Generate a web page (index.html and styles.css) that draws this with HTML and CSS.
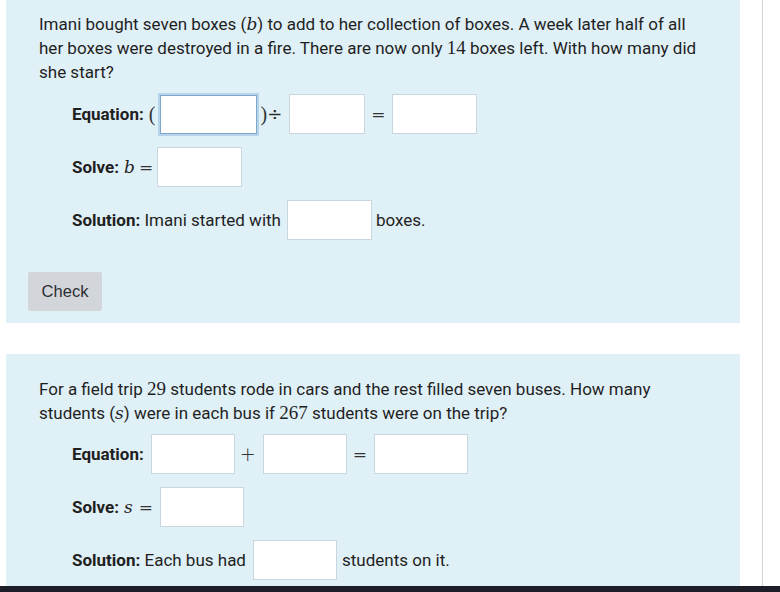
FILE: index.html
```html
<!DOCTYPE html>
<html>
<head>
<meta charset="utf-8">
<link rel="stylesheet" href="styles.css">
</head>
<body>
<div class="page">
  <main class="column">
    <section class="card card-first">
      <p class="question">Imani bought seven boxes (<span class="mi">b</span>) to add to her collection of boxes. A week later half of all her boxes were destroyed in a fire. There are now only <span class="mn">14</span> boxes left. With how many did she start?</p>
      <div class="rows">
        <div class="row">
          <b class="label">Equation:</b>
          <span class="mo paren-open">(</span>
          <span class="box box-focus"></span>
          <span class="mo paren-close">)</span><span class="mo op-div">÷</span>
          <span class="box box-w76"></span>
          <span class="mo op-eq">=</span>
          <span class="box"></span>
        </div>
        <div class="row">
          <b class="label">Solve:</b>
          <span class="mi mi-row">b</span><span class="mo op-eq-b">=</span>
          <span class="box"></span>
        </div>
        <div class="row">
          <b class="label">Solution:</b><span class="txt">&nbsp;Imani started with</span>
          <span class="box box-sol1"></span>
          <span class="txt">boxes.</span>
        </div>
      </div>
      <button class="check">Check</button>
    </section>

    <section class="card card-second">
      <p class="question">For a field trip <span class="mn">29</span> students rode in cars and the rest filled seven buses. How many students (<span class="mi">s</span>) were in each bus if <span class="mn">267</span> students were on the trip?</p>
      <div class="rows">
        <div class="row">
          <b class="label">Equation:</b>
          <span class="box box-eq2a"></span>
          <span class="mo op-plus">+</span>
          <span class="box box-eq2"></span>
          <span class="mo op-eq2">=</span>
          <span class="box box-w94"></span>
        </div>
        <div class="row">
          <b class="label">Solve:</b>
          <span class="mi mi-row">s</span><span class="mo op-eq-s">=</span>
          <span class="box box-eq2"></span>
        </div>
        <div class="row">
          <b class="label">Solution:</b><span class="txt">&nbsp;Each bus had</span>
          <span class="box box-sol2"></span>
          <span class="txt">students on it.</span>
        </div>
      </div>
    </section>
  </main>
  <div class="gutter"></div>
  <div class="scroll"></div>
</div>
<div class="bottombar"></div>
</body>
</html>
```

FILE: styles.css
```css
html, body {
  margin: 0;
  padding: 0;
  background: #ffffff;
  overflow: hidden;
  height: 592px;
}
body {
  font-family: Roboto, "Liberation Sans", sans-serif;
  font-size: 17px;
  color: #1f1f1f;
}
.page {
  display: flex;
  height: 592px;
}
.column {
  width: 734px;
  margin-left: 6px;
  display: flex;
  flex-direction: column;
  gap: 31px;
}
.gutter {
  width: 22px;
}
.scroll {
  width: 17px;
  border-left: 1px solid #d4d4d4;
  background: #ffffff;
}
.card {
  background: #dff0f7;
  padding: 12px 33px 12px 33px;
}
.card-second {
  padding-top: 23px;
  flex: 1;
}
.question {
  margin: 0;
  line-height: 24px;
}
.mi {
  font-family: "DejaVu Serif", "Liberation Serif", serif;
  font-style: italic;
  font-size: 17px;
  line-height: 1;
}
.mn {
  font-family: "Liberation Serif", serif;
  font-size: 19px;
  line-height: 1;
}
.rows {
  display: flex;
  flex-direction: column;
  gap: 13px;
  padding-left: 33px;
  margin-top: 10px;
}
.card-second .rows {
  margin-top: 9px;
}
.row {
  display: flex;
  align-items: center;
  height: 40px;
}
.label {
  font-weight: 700;
}
.txt {
  white-space: pre;
}
.box {
  display: inline-block;
  box-sizing: border-box;
  width: 85px;
  height: 40px;
  background: #ffffff;
  border: 1px solid #c9d6dd;
  flex: none;
}
.box-focus {
  width: 97px;
  height: 39px;
  border: 1px solid #7ea7c9;
  box-shadow: 0 0 0 2px #b7d4ec;
  margin-left: 5px;
}
.box-w76 { width: 76px; }
.box-w94 { width: 94px; }
.box-eq2 { width: 84px; }
.box-eq2a { width: 84px; margin-left: 7px; }
.box-sol1 { margin: 0 4px 0 6px; }
.box-sol2 { width: 84px; margin: 0 5px 0 7px; }
.mo {
  font-family: "DejaVu Serif", "Liberation Serif", serif;
  font-size: 17px;
  color: #333;
  line-height: 1;
}
.paren-open { margin-left: 5px; font-family: "Liberation Serif", serif; font-size: 20px; }
.paren-close { margin-left: 3px; font-family: "Liberation Serif", serif; font-size: 20px; }
.op-div { margin-right: 7px; font-family: "DejaVu Sans", sans-serif; font-size: 18px; color: #2a2a2a; }
.op-eq { margin: 0 7px 0 6px; }
.op-plus { margin: 0 7px 0 5px; font-family: "DejaVu Sans", sans-serif; font-weight: 200; font-size: 19px; }
.op-eq2 { margin: 0 7px 0 6px; }
.mi-row { margin-left: 5px; }
.op-eq-b { margin: 0 4px 0 4px; }
.op-eq-s { margin: 0 7px 0 6px; }
.check {
  margin-top: 32px;
  margin-left: -11px;
  width: 74px;
  height: 39px;
  background: #d2d5d9;
  border: none;
  border-radius: 2px;
  font-family: "Liberation Sans", Arial, sans-serif;
  font-size: 16.5px;
  color: #2b2f33;
  padding: 0;
}
.bottombar {
  position: fixed;
  left: 0;
  right: 0;
  bottom: 0;
  height: 6px;
  background: #1c1d27;
}
```
